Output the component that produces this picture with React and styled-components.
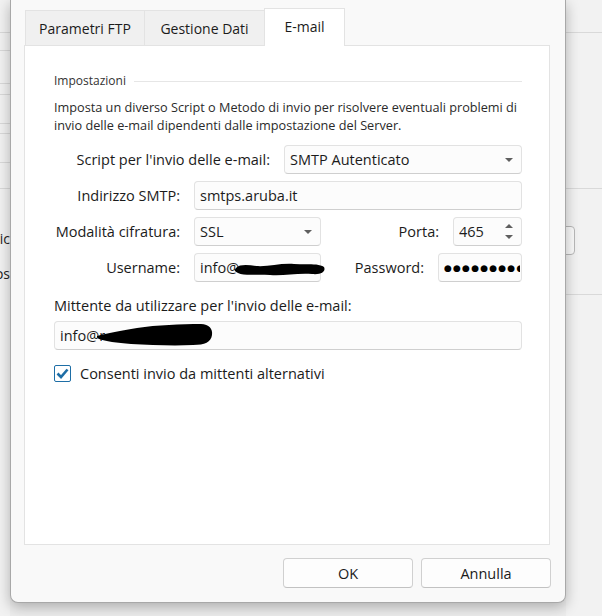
import React from 'react'
import styled, { createGlobalStyle } from 'styled-components'

const Global = createGlobalStyle`
  html, body {
    margin: 0;
    padding: 0;
    background: #ececec;
    font-family: "Open Sans", "Noto Sans", sans-serif;
    color: #1b1b1b;
  }
`

const Screen = styled.div`
  display: flex;
  width: 602px;
  height: 616px;
  overflow: hidden;
  background: #ededed;
`

const BackStrip = styled.div`
  display: flex;
  flex-direction: column;
  width: ${(p) => p.$w}px;
  flex-shrink: 0;
  background: #f2f2f2;
`

const BackCell = styled.div`
  height: ${(p) => p.$h}px;
  border-bottom: ${(p) => (p.$line ? '1px solid #d9d9d9' : 'none')};
  flex-shrink: 0;
`

const BackText = styled.div`
  height: ${(p) => p.$h}px;
  display: flex;
  align-items: center;
  justify-content: flex-end;
  overflow: hidden;
  white-space: nowrap;
  font-size: 14px;
  color: #222;
`

const BackButton = styled.div`
  height: 29px;
  width: 19px;
  margin-left: -10px;
  border: 1px solid #b9b9b9;
  border-radius: 4px;
  box-sizing: border-box;
  background: #fafafa;
`

const Dialog = styled.div`
  position: relative;
  z-index: 1;
  width: 556px;
  height: 603px;
  flex-shrink: 0;
  box-sizing: border-box;
  background: #f9f9f9;
  border: 1px solid #a8a8a8;
  border-top: none;
  border-radius: 0 0 8px 8px;
  box-shadow: 0 4px 14px rgba(0, 0, 0, 0.28);
  padding: 8px 15px 0 13px;
  display: flex;
  flex-direction: column;
`

const TabBar = styled.div`
  display: flex;
  align-items: flex-end;
  height: 37px;
  padding-left: 2px;
`

const Tab = styled.div`
  position: relative;
  z-index: ${(p) => (p.$active ? 2 : 0)};
  width: ${(p) => p.$w}px;
  height: ${(p) => (p.$active ? 38 : 35)}px;
  margin-bottom: ${(p) => (p.$active ? -1 : 0)}px;
  margin-left: -1px;
  box-sizing: border-box;
  display: flex;
  align-items: center;
  justify-content: center;
  padding-bottom: ${(p) => (p.$active ? 3 : 0)}px;
  background: ${(p) => (p.$active ? '#ffffff' : '#f0f0f0')};
  border: 1px solid #e3e3e3;
  border-bottom: none;
  font-size: 14px;
`

const Panel = styled.div`
  height: 500px;
  box-sizing: border-box;
  background: #ffffff;
  border: 1px solid #e3e3e3;
  padding: 27px 27px 0 29px;
  display: flex;
  flex-direction: column;
`

const GroupHead = styled.div`
  display: flex;
  align-items: center;
  gap: 8px;
  font-size: 12px;
  line-height: 16px;
  color: #333;
  &::after {
    content: '';
    flex: 1;
    height: 1px;
    background: #e6e6e6;
  }
`

const Hint = styled.p`
  margin: 9px 0 0;
  font-size: 12.7px;
  line-height: 18px;
  color: #2a2a2a;
`

const Form = styled.div`
  display: flex;
  flex-direction: column;
  gap: 7px;
  margin-top: 11px;
`

const FieldRow = styled.div`
  display: flex;
  align-items: center;
  height: 29px;
  gap: 14px;
`

const Label = styled.label`
  width: ${(p) => (p.$w ? `${p.$w}px` : 'auto')};
  flex: ${(p) => (p.$w ? 'none' : '1')};
  text-align: right;
  font-size: 14.5px;
  white-space: nowrap;
`

const Box = styled.div`
  position: relative;
  height: 29px;
  width: ${(p) => (p.$w ? `${p.$w}px` : 'auto')};
  flex: ${(p) => (p.$w ? 'none' : '1')};
  box-sizing: border-box;
  display: flex;
  align-items: center;
  padding: 0 ${(p) => (p.$tight ? 1 : 5)}px 0 5px;
  background: #fcfcfc;
  border: 1px solid #e2e2e2;
  border-bottom-color: #cfcfcf;
  border-radius: 4px;
  font-size: 14.5px;
  white-space: nowrap;
`

const BoxText = styled.span`
  flex: 1;
  overflow: hidden;
`

const Caret = styled.span`
  width: 0;
  height: 0;
  margin-right: 3px;
  border-left: 4px solid transparent;
  border-right: 4px solid transparent;
  border-top: 4px solid #5f5f5f;
`

const Spin = styled.span`
  display: flex;
  flex-direction: column;
  gap: 7px;
  margin-right: 3px;
`

const SpinArrow = styled.span`
  width: 0;
  height: 0;
  border-left: 4px solid transparent;
  border-right: 4px solid transparent;
  border-top: ${(p) => (p.$up ? 'none' : '4px solid #5f5f5f')};
  border-bottom: ${(p) => (p.$up ? '4px solid #5f5f5f' : 'none')};
`

const Dots = styled.span`
  overflow: hidden;
  font-family: "DejaVu Sans", sans-serif;
  font-size: 9px;
  letter-spacing: 1.2px;
  color: #000;
`

const Redact = styled.svg`
  position: absolute;
  left: ${(p) => p.$x}px;
  top: ${(p) => p.$y}px;
  overflow: visible;
`

const FieldLabel = styled.div`
  margin-top: 15px;
  font-size: 14.5px;
  line-height: 18px;
`

const WideBox = styled(Box)`
  flex: none;
  margin-top: 6px;
`

const CheckRow = styled.label`
  display: flex;
  align-items: center;
  gap: 9px;
  margin-top: 14px;
  font-size: 14.5px;
`

const CheckBox = styled.span`
  width: 17px;
  height: 17px;
  box-sizing: border-box;
  border: 1px solid #1e6ea6;
  border-radius: 2px;
  background: #fff;
  display: flex;
  align-items: center;
  justify-content: center;
`

const Footer = styled.div`
  display: flex;
  justify-content: flex-end;
  gap: 8px;
  margin: 13px -1px 0 0;
`

const Button = styled.button`
  width: 130px;
  height: 30px;
  box-sizing: border-box;
  background: #fdfdfd;
  border: 1px solid #d0d0d0;
  border-bottom-color: #c2c2c2;
  border-radius: 4px;
  font-family: inherit;
  font-size: 14.5px;
  color: #1b1b1b;
`

export default function App() {
  return (
    <>
      <Global />
      <Screen>
        <BackStrip $w={10}>
          <BackCell $h={32} $line />
          <BackCell $h={17} $line />
          <BackCell $h={32} $line />
          <BackCell $h={10} $line />
          <BackCell $h={28} $line />
          <BackCell $h={9} $line />
          <BackCell $h={28} $line />
          <BackCell $h={25} $line />
          <BackCell $h={36} />
          <BackText $h={26}>Applic</BackText>
          <BackText $h={44}>Ethos</BackText>
        </BackStrip>

        <Dialog>
          <TabBar>
            <Tab $w={120}>Parametri FTP</Tab>
            <Tab $w={121}>Gestione Dati</Tab>
            <Tab $w={81} $active>E-mail</Tab>
          </TabBar>

          <Panel>
            <GroupHead>Impostazioni</GroupHead>
            <Hint>
              Imposta un diverso Script o Metodo di invio per risolvere eventuali problemi di invio delle
              e-mail dipendenti dalle impostazione del Server.
            </Hint>

            <Form>
              <FieldRow>
                <Label $w={216}>Script per l'invio delle e-mail:</Label>
                <Box>
                  <BoxText>SMTP Autenticato</BoxText>
                  <Caret />
                </Box>
              </FieldRow>

              <FieldRow>
                <Label $w={126}>Indirizzo SMTP:</Label>
                <Box>
                  <BoxText>smtps.aruba.it</BoxText>
                </Box>
              </FieldRow>

              <FieldRow>
                <Label $w={126}>Modalità cifratura:</Label>
                <Box $w={127}>
                  <BoxText>SSL</BoxText>
                  <Caret />
                </Box>
                <Label>Porta:</Label>
                <Box $w={69}>
                  <BoxText>465</BoxText>
                  <Spin>
                    <SpinArrow $up />
                    <SpinArrow />
                  </Spin>
                </Box>
              </FieldRow>

              <FieldRow>
                <Label $w={126}>Username:</Label>
                <Box $w={127}>
                  <BoxText>info@</BoxText>
                  <Redact $x={39} $y={7} width="92" height="16" viewBox="0 0 92 16">
                    <path
                      d="M2 7 C6 3 14 4 22 5 C34 6 46 2 60 3 C72 4 84 2 90 6 C92 10 88 14 78 13 C62 12 50 15 36 14 C22 13 10 15 4 12 C1 11 0 9 2 7 Z"
                      fill="#000"
                    />
                  </Redact>
                </Box>
                <Label>Password:</Label>
                <Box $w={84} $tight>
                  <Dots>●●●●●●●●●●●</Dots>
                </Box>
              </FieldRow>
            </Form>

            <FieldLabel>Mittente da utilizzare per l'invio delle e-mail:</FieldLabel>
            <WideBox>
              <BoxText>info@r</BoxText>
              <Redact $x={42} $y={1} width="116" height="24" viewBox="0 0 116 24">
                <path
                  d="M0 13 C10 10 24 8 40 5 C60 2 84 1 104 1 C112 1 116 6 115 12 C114 19 108 22 96 22 C76 23 54 22 34 21 C20 20 8 18 2 16 C0 15 0 14 0 13 Z"
                  fill="#000"
                />
              </Redact>
            </WideBox>

            <CheckRow>
              <CheckBox>
                <svg width="13" height="11" viewBox="0 0 13 11">
                  <path d="M1.5 5.5 L5 9 L11.5 1.5" fill="none" stroke="#1e6ea6" strokeWidth="2.6" />
                </svg>
              </CheckBox>
              Consenti invio da mittenti alternativi
            </CheckRow>
          </Panel>

          <Footer>
            <Button>OK</Button>
            <Button>Annulla</Button>
          </Footer>
        </Dialog>

        <BackStrip $w={36}>
          <BackCell $h={32} $line />
          <BackCell $h={155} $line />
          <BackCell $h={37} />
          <BackButton />
          <BackCell $h={39} $line />
        </BackStrip>
      </Screen>
    </>
  )
}
